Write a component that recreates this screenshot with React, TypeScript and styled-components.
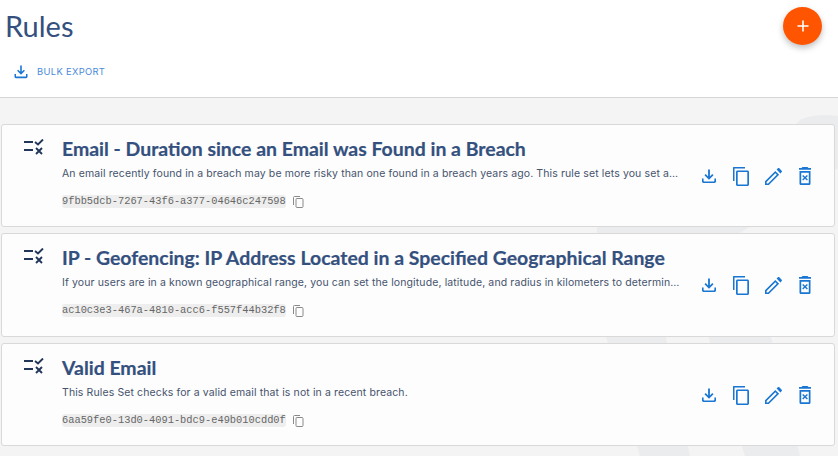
import React from 'react';
import styled, { createGlobalStyle } from 'styled-components';

const Global = createGlobalStyle`
  html, body { margin: 0; padding: 0; background: #fff; }
  #root { width: 838px; height: 456px; overflow: hidden; }
`;

const Page = styled.div`
  width: 838px;
  height: 456px;
  display: flex;
  flex-direction: column;
  overflow: hidden;
  font-family: "Lato", "Liberation Sans", sans-serif;
`;

const Header = styled.header`
  position: relative;
  height: 98px;
  flex: none;
  box-sizing: border-box;
  padding: 8px 0 0 5px;
  background: #fff;
  border-bottom: 1px solid #d6d6d6;
`;

const PageTitle = styled.h1`
  margin: 0;
  font-size: 29px;
  line-height: 36px;
  font-weight: 400;
  color: #34507e;
`;

const ExportButton = styled.button`
  display: flex;
  align-items: center;
  gap: 8px;
  margin: 20px 0 0 8px;
  padding: 0;
  background: none;
  border: 0;
  color: #4a8ad8;
  font-family: "Inter", "Liberation Sans", sans-serif;
  font-size: 9.4px;
  letter-spacing: 0.33px;
  line-height: 16px;
`;

const Fab = styled.button`
  position: absolute;
  top: 7px;
  right: 16px;
  width: 39px;
  height: 38px;
  padding: 0;
  border: 0;
  border-radius: 50%;
  background: #ff5500;
  box-shadow: 0 3px 6px rgba(0, 0, 0, 0.25);
  display: flex;
  align-items: center;
  justify-content: center;
`;

const Main = styled.main`
  position: relative;
  flex: 1;
  background: #f4f4f4;
  display: flex;
  flex-direction: column;
  gap: 6px;
  padding: 26px 3px 0 1px;
`;

const Watermark = styled.svg`
  position: absolute;
  inset: 0;
  width: 100%;
  height: 100%;
`;

const Card = styled.article<{ $h: number }>`
  position: relative;
  height: ${p => p.$h}px;
  box-sizing: border-box;
  background: #fdfdfd;
  border: 1px solid #d9d9d9;
  border-radius: 3px;
  display: flex;
  align-items: flex-start;
`;

const RuleIcon = styled.div`
  width: 60px;
  flex: none;
  padding: 14px 0 0 21px;
  box-sizing: border-box;
  height: 34px;
`;

const Body = styled.div`
  flex: 1;
  min-width: 0;
  padding-top: 11px;
`;

const Title = styled.h2`
  margin: 0;
  font-size: 19.45px;
  line-height: 26px;
  font-weight: 700;
  color: #34507e;
  -webkit-text-stroke: 0.2px #34507e;
  white-space: nowrap;
`;

const Description = styled.p`
  margin: 4px 0 0;
  width: 620px;
  font-family: "Inter", "Liberation Sans", sans-serif;
  font-size: 10.5px;
  letter-spacing: 0.115px;
  line-height: 16px;
  color: #46536d;
  white-space: nowrap;
  overflow: hidden;
  text-overflow: ellipsis;
`;

const IdRow = styled.div`
  display: flex;
  align-items: center;
  gap: 7px;
  margin-top: 13px;
`;

const IdCode = styled.code`
  background: #eeeeee;
  border-radius: 3px;
  padding: 0;
  font-family: "Liberation Mono", monospace;
  font-size: 10.37px;
  line-height: 13px;
  color: #666;
`;

const Actions = styled.div`
  position: absolute;
  top: 0;
  bottom: 0;
  right: 17px;
  display: flex;
  align-items: center;
  gap: 8px;
`;

const ActionIcon = styled.svg`
  width: 24px;
  height: 24px;
  fill: #1976d2;
  display: block;
`;

const DownloadIcon = () => (
  <ActionIcon viewBox="0 0 24 24">
    <path d="M11.100 5.500h1.800v7l2.400-2.400 1.200 1.200-4.500 4.500-4.500-4.500 1.200-1.200 2.400 2.400z" />
    <path d="M6.600 14.500v2.300c0 .4.200.6.600.6h9.600c.4 0 .6-.2.600-.6v-2.300H19v3.100c0 .8-.7 1.400-1.500 1.400h-11c-.8 0-1.500-.6-1.500-1.400v-3.100z" />
  </ActionIcon>
);
const CopyIcon = () => (
  <ActionIcon viewBox="0 0 24 24">
    <path d="M16 3H5c-1 0-1 .5-1 1v13h1.500V4.500H16z" />
    <path fillRule="evenodd" d="M8.500 6.500h10c.8 0 1.500.7 1.500 1.500v12.500c0 .8-.7 1.500-1.500 1.500h-10C7.700 22 7 21.300 7 20.500V8c0-.8.7-1.500 1.500-1.500zm.2 1.600v12.300h9.600V8.100z" />
  </ActionIcon>
);
const EditIcon = () => (
  <ActionIcon viewBox="0 0 24 24">
    <path fillRule="evenodd" d="M4 17.200V21h3.800L18.100 10.700l-3.800-3.800zM5.600 19.400v-1.500l8.700-8.700 1.500 1.500-8.700 8.700z" />
    <path d="M15.600 5.600l3.800 3.800 1.300-1.300c.4-.4.400-1 0-1.400l-2.400-2.400c-.4-.4-1-.4-1.400 0z" />
  </ActionIcon>
);
const TrashIcon = () => (
  <ActionIcon viewBox="0 0 24 24">
    <path d="M15.500 4l-1-1h-5l-1 1H6v1.700h12V4z" />
    <path fillRule="evenodd" d="M6.500 7v12.500c0 1 .8 1.500 1.700 1.500h7.600c.9 0 1.700-.5 1.700-1.500V7zm1.700 1.700h7.600v10.600H8.200z" />
    <path d="M10.200 10.900l-1 1 1.800 1.900-1.800 1.800 1 1 1.800-1.800 1.900 1.800 1-1-1.900-1.800 1.900-1.900-1-1-1.900 1.900z" />
  </ActionIcon>
);

const RulesGlyph = () => (
  <svg width="22" height="16" viewBox="0 0 22 16" fill="none" stroke="#22365a" strokeWidth="1.900">
    <path d="M1 3h9M1 11h9" />
    <path d="M12 3l3 2.500L20 0.500" />
    <path d="M13 9l6 6M19 9l-6 6" />
  </svg>
);

const SmallCopy = () => (
  <svg width="11" height="12" viewBox="0 0 11 12" fill="none" stroke="#8a8a8a" strokeWidth="1">
    <path d="M7 .5H1.500q-1 0-1 1V9" />
    <rect x="3" y="2.500" width="7" height="9" rx="1" />
  </svg>
);

const rules = [
  {
    title: 'Email - Duration since an Email was Found in a Breach',
    desc: 'An email recently found in a breach may be more risky than one found in a breach years ago. This rule set lets you set an acceptable threshold for how long ago the breach occurred.',
    id: '9fbb5dcb-7267-43f6-a377-04646c247598',
    h: 103,
  },
  {
    title: 'IP - Geofencing: IP Address Located in a Specified Geographical Range',
    desc: 'If your users are in a known geographical range, you can set the longitude, latitude, and radius in kilometers to determine whether an IP address falls in that range.',
    id: 'ac10c3e3-467a-4810-acc6-f557f44b32f8',
    h: 104,
  },
  {
    title: 'Valid Email',
    desc: 'This Rules Set checks for a valid email that is not in a recent breach.',
    id: '6aa59fe0-13d0-4091-bdc9-e49b010cdd0f',
    h: 103,
  },
];

export default function App() {
  return (
    <Page>
      <Global />
      <Header>
        <PageTitle>Rules</PageTitle>
        <ExportButton>
          <svg width="16" height="16" viewBox="0 0 16 16" fill="#1976d2">
            <path d="M7.200 1.500h1.600v6.300l2.100-2.100 1 1L8 10.700 4.100 6.700l1-1 2.100 2.100z" />
            <path d="M1.500 10H3v2.300c0 .2.100.3.300.3h9.400c.2 0 .3-.1.300-.3V10h1.500v2.800c0 .8-.6 1.400-1.400 1.400H2.900c-.8 0-1.400-.6-1.400-1.400z" />
          </svg>
          BULK EXPORT
        </ExportButton>
        <Fab aria-label="Add">
          <svg width="14" height="14" viewBox="0 0 14 14" stroke="#fff" strokeWidth="1.600">
            <path d="M7 1.500v11M1.500 7h11" />
          </svg>
        </Fab>
      </Header>
      <Main>
        <Watermark viewBox="0 0 838 358" fill="#ebecee">
          <path d="M838 18Q815 15 800 22L720 100 597 125 597 135 740 135 838 70z" />
          <path d="M605 235h60l25 123h-50z" />
          <path d="M707 235h63l30 123h-55z" />
        </Watermark>
        {rules.map(r => (
          <Card key={r.id} $h={r.h}>
            <RuleIcon><RulesGlyph /></RuleIcon>
            <Body>
              <Title>{r.title}</Title>
              <Description>{r.desc}</Description>
              <IdRow>
                <IdCode>{r.id}</IdCode>
                <SmallCopy />
              </IdRow>
            </Body>
            <Actions>
              <DownloadIcon />
              <CopyIcon />
              <EditIcon />
              <TrashIcon />
            </Actions>
          </Card>
        ))}
      </Main>
    </Page>
  );
}
